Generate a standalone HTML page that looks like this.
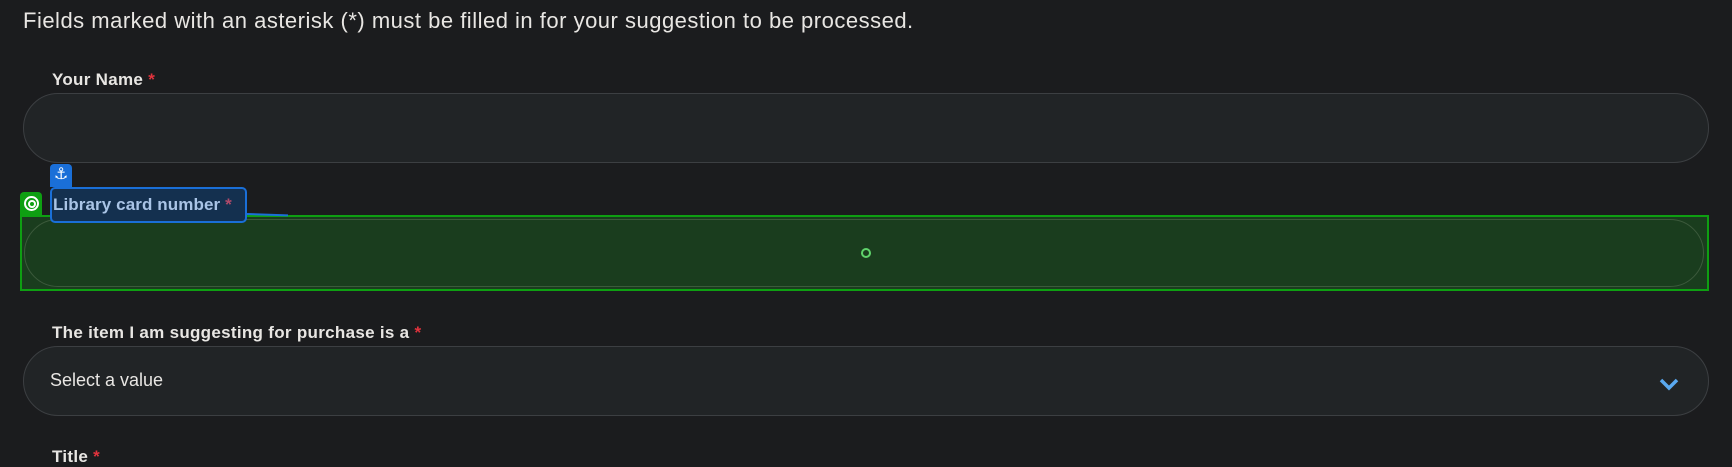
<!DOCTYPE html>
<html><head><style>
body{margin:0;width:1732px;height:461px;background:#1b1c1e;overflow:hidden;position:relative;font-family:"Liberation Sans",sans-serif;color:#e8e6e3}
.a{position:absolute}
.lbl{font-weight:900;font-size:17px;color:#e8e6e3;letter-spacing:0.3px;white-space:nowrap}
.st{color:#e2333d}
.inp{position:absolute;left:23px;width:1684px;height:68px;border:1px solid #3c3f42;border-radius:35px;background:#212426}
</style></head><body>
<div class="a" style="left:23px;top:8px;font-size:22px;letter-spacing:0.5px;white-space:nowrap">Fields marked with an asterisk (*) must be filled in for your suggestion to be processed.</div>
<div class="a lbl" style="left:52px;top:70px">Your Name <span class="st">*</span></div>
<div class="inp" style="top:93px"></div>

<div class="a" style="left:50px;top:164px;width:22px;height:23px;background:#1a6fd8;border-radius:4px 4px 0 0;color:#fff;font-size:16px;text-align:center;line-height:22px">&#9875;&#xFE0E;</div>
<div class="a" style="left:20px;top:215px;width:1689px;height:76px;border:2px solid #0e9f12;background:#1a3d1e;box-sizing:border-box"></div>
<div class="a" style="left:24px;top:219px;width:1680px;height:68px;border:1px solid #3c5a3c;border-radius:35px;box-sizing:border-box"></div>
<div class="a" style="left:20px;top:192px;width:22px;height:23px;background:#0e9f12;border-radius:4px 4px 0 0"></div>
<div class="a" style="left:24px;top:196px;width:11px;height:11px;border:2px solid #fff;border-radius:50%"></div>
<div class="a" style="left:28px;top:200px;width:4px;height:4px;border:2px solid #fff;border-radius:50%"></div>
<div class="a" style="left:247px;top:213px;width:41px;height:2px;background:#1a6fd8;transform:rotate(2deg);transform-origin:left"></div>
<div class="a" style="left:50px;top:187px;width:197px;height:36px;border:2px solid #1a6fd8;border-radius:5px;background:#14304f;box-sizing:border-box"></div>
<div class="a lbl" style="left:53px;top:195px;color:#a9c4e6;letter-spacing:0.1px">Library card number <span style="color:#b04a6a">*</span></div>
<div class="a" style="left:861px;top:248px;width:6px;height:6px;border:2px solid #5fd36b;border-radius:50%;background:#1a3d1e"></div>

<div class="a lbl" style="left:52px;top:323px">The item I am suggesting for purchase is a <span class="st">*</span></div>
<div class="inp" style="top:346px"></div>
<div class="a" style="left:50px;top:370px;font-size:18px">Select a value</div>
<svg class="a" style="left:1659px;top:377px" width="20" height="14" viewBox="0 0 20 14"><path d="M2 3 L10 11 L18 3" fill="none" stroke="#5aa9f0" stroke-width="3.5"/></svg>
<div class="a lbl" style="left:52px;top:447px">Title <span class="st">*</span></div>
</body></html>
